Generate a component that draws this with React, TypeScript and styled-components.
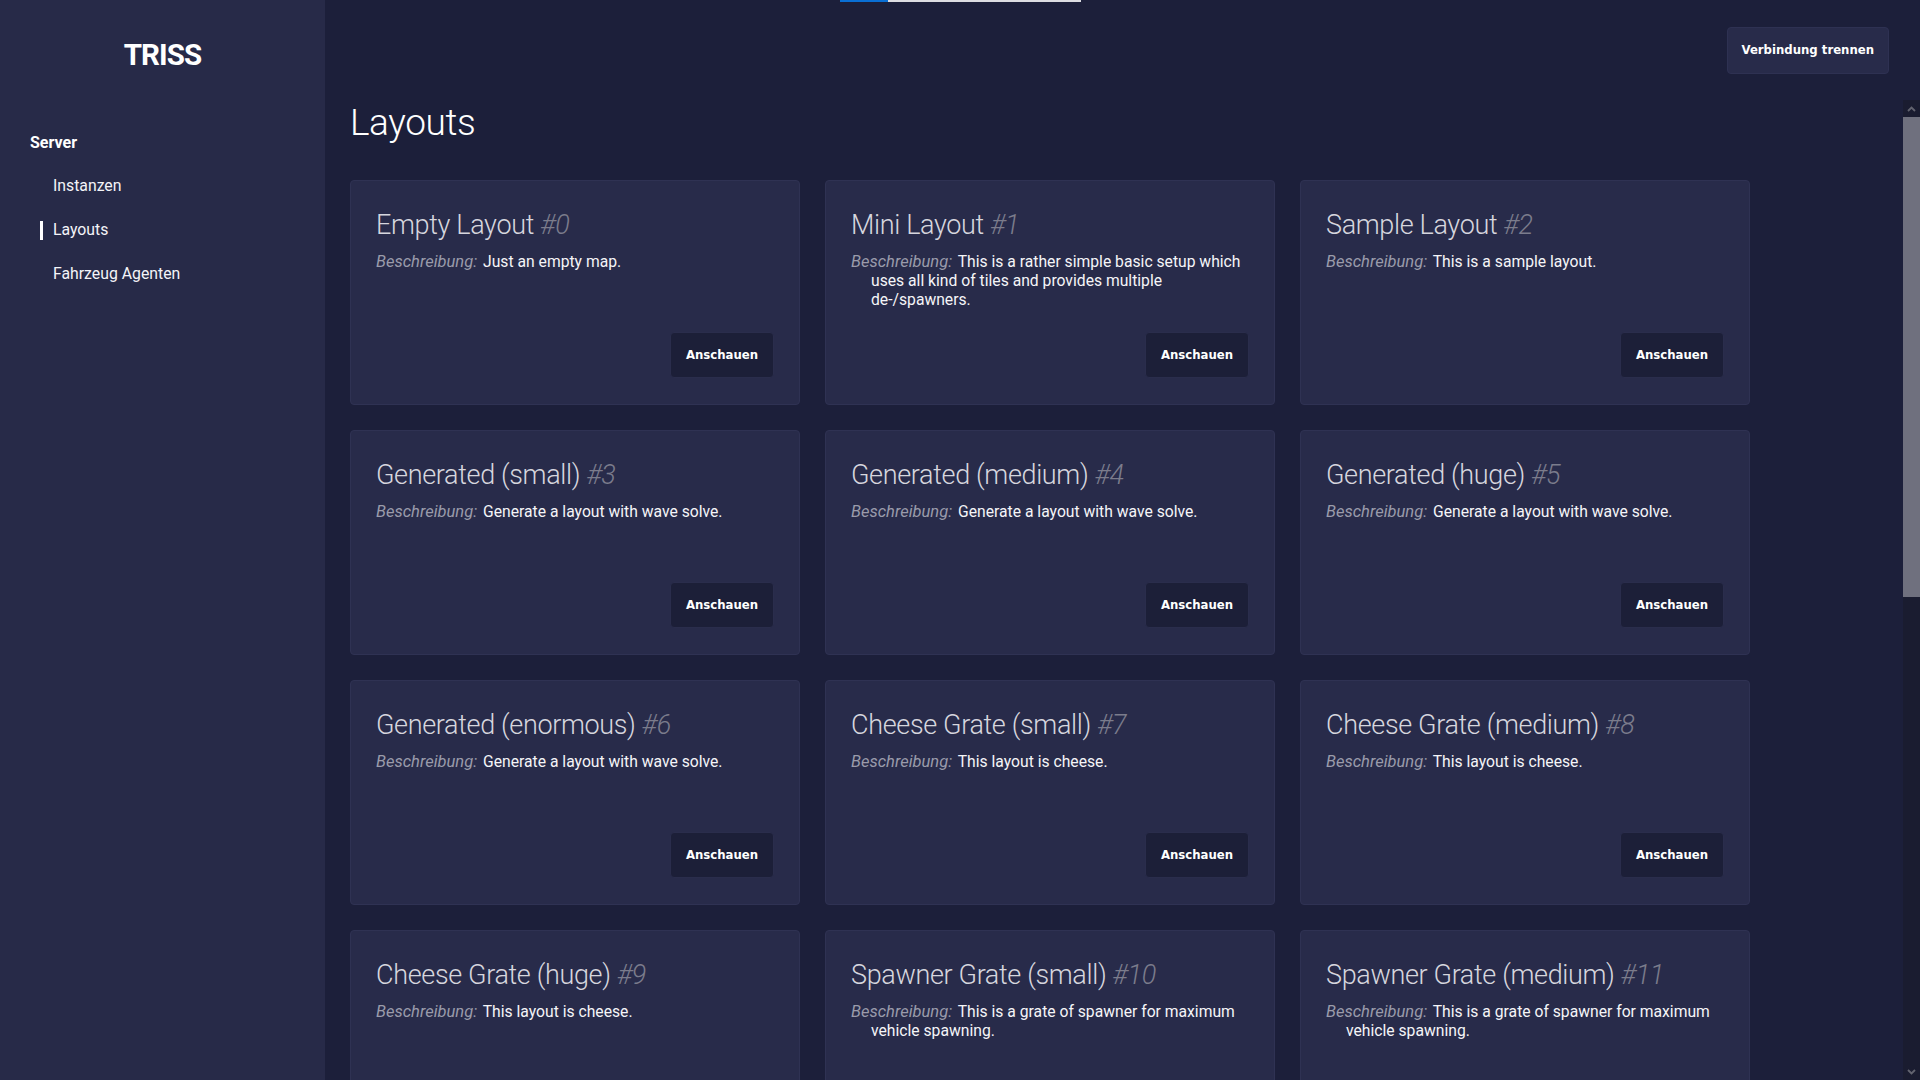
import React from "react";
import styled, { createGlobalStyle } from "styled-components";

const GlobalStyle = createGlobalStyle`
  html, body, #root {
    height: 100%;
  }
  body {
    margin: 0;
    background: #1c1f3a;
    font-family: Roboto, "Noto Sans", "Liberation Sans", sans-serif;
    color: #f2f2f5;
    overflow: hidden;
  }
  * {
    box-sizing: border-box;
  }
`;

const Shell = styled.div`
  display: flex;
  height: 100vh;
  width: 100%;
`;

const Sidebar = styled.aside`
  width: 325px;
  flex-shrink: 0;
  background: #272a48;
  padding-top: 36px;
  display: flex;
  flex-direction: column;
`;

const Logo = styled.div`
  text-align: center;
  font-size: 29.5px;
  letter-spacing: -0.9px;
  line-height: 38px;
  font-weight: 700;
  color: #ffffff;
`;

const NavSection = styled.nav`
  margin-top: 59px;
  padding-left: 30px;
  display: flex;
  flex-direction: column;
`;

const SectionLabel = styled.div`
  font-size: 16px;
  line-height: 20px;
  font-weight: 700;
  color: #ffffff;
  margin-bottom: 11px;
`;

const NavItem = styled.a<{ $active?: boolean }>`
  display: flex;
  align-items: center;
  padding: 12px 0 12px 10px;
  font-size: 15.8px;
  line-height: 20px;
  color: #f4f4f8;
  text-decoration: none;
  cursor: pointer;
`;

const Marker = styled.span<{ $active?: boolean }>`
  width: 3px;
  height: 19px;
  margin-right: 10px;
  background: ${(p) => (p.$active ? "#ffffff" : "transparent")};
`;

const Main = styled.main`
  flex: 1;
  min-width: 0;
  display: flex;
  flex-direction: column;
  position: relative;
`;

const TopBar = styled.header`
  height: 100px;
  flex-shrink: 0;
  display: flex;
  align-items: center;
  justify-content: flex-end;
  padding-right: 31px;
`;

const Progress = styled.div`
  position: absolute;
  top: 0;
  left: 515px;
  display: flex;
  height: 2px;
`;

const ProgressPart = styled.span<{ $w: number; $c: string }>`
  width: ${(p) => p.$w}px;
  height: 2px;
  background: ${(p) => p.$c};
`;

const Button = styled.button<{ $raised?: boolean }>`
  height: ${(p) => (p.$raised ? 47 : 46)}px;
  padding: 0 ${(p) => (p.$raised ? 14 : 15)}px;
  background: ${(p) => (p.$raised ? "#282b4a" : "#1c1f38")};
  border: 1px solid ${(p) => (p.$raised ? "#2e3152" : "#2a2d4c")};
  border-radius: 4px;
  color: #ffffff;
  font-family: "DejaVu Sans Condensed", "DejaVu Sans", Verdana, sans-serif;
  font-stretch: condensed;
  font-weight: 700;
  font-size: 13px;
  line-height: 16px;
  cursor: pointer;
  white-space: nowrap;
`;

const ScrollArea = styled.div`
  flex: 1;
  min-height: 0;
  display: flex;
`;

const Content = styled.section`
  flex: 1;
  min-width: 0;
  overflow: hidden;
  padding-left: 25px;
`;

const PageTitle = styled.h1`
  margin: 0 0 35px;
  font-size: 37px;
  letter-spacing: -0.4px;
  line-height: 45px;
  font-weight: 300;
  color: #ffffff;
`;

const Grid = styled.div`
  display: grid;
  grid-template-columns: repeat(3, 450px);
  gap: 25px;
`;

const Card = styled.article`
  height: 225px;
  background: #282b4a;
  border: 1px solid #2f3253;
  border-radius: 4px;
  padding: 25px 25px 26px;
  display: flex;
  flex-direction: column;
`;

const CardTitle = styled.h2`
  margin: 0 0 8px;
  font-size: 27px;
  letter-spacing: -0.35px;
  line-height: 38px;
  font-weight: 300;
  color: #d6d6de;
`;

const CardId = styled.span`
  font-style: italic;
  color: #7b7c8c;
`;

const Description = styled.p`
  margin: 0;
  font-size: 15.7px;
  line-height: 19.2px;
  color: #f5f5f8;
  padding-left: 20px;
  text-indent: -20px;
`;

const DescLabel = styled.span`
  font-style: italic;
  font-size: 16.5px;
  margin-right: 2px;
  color: #9a9bab;
`;

const CardFooter = styled.div`
  margin-top: auto;
  display: flex;
  justify-content: flex-end;
`;

const Scrollbar = styled.div`
  width: 17px;
  flex-shrink: 0;
  display: flex;
  flex-direction: column;
  background: #1a1c30;
`;

const ScrollArrow = styled.div`
  height: 17px;
  display: flex;
  align-items: center;
  justify-content: center;
`;

const ScrollTrack = styled.div`
  flex: 1;
  display: flex;
  flex-direction: column;
`;

const Thumb = styled.div`
  height: 480px;
  background: #6f707e;
`;

const Chevron = ({ down }: { down?: boolean }) => (
  <svg width="9" height="6" viewBox="0 0 9 6">
    <polyline
      points={down ? "1,1 4.5,4.5 8,1" : "1,5 4.5,1.5 8,5"}
      fill="none"
      stroke="#62636f"
      strokeWidth="1.8"
    />
  </svg>
);

type Layout = { id: number; name: string; desc: string };

const grate = "This is a grate of spawner for maximum vehicle spawning.";
const wave = "Generate a layout with wave solve.";
const cheese = "This layout is cheese.";

const layouts: Layout[] = [
  { id: 0, name: "Empty Layout", desc: "Just an empty map." },
  {
    id: 1,
    name: "Mini Layout",
    desc: "This is a rather simple basic setup which uses all kind of tiles and provides multiple de-/spawners.",
  },
  { id: 2, name: "Sample Layout", desc: "This is a sample layout." },
  { id: 3, name: "Generated (small)", desc: wave },
  { id: 4, name: "Generated (medium)", desc: wave },
  { id: 5, name: "Generated (huge)", desc: wave },
  { id: 6, name: "Generated (enormous)", desc: wave },
  { id: 7, name: "Cheese Grate (small)", desc: cheese },
  { id: 8, name: "Cheese Grate (medium)", desc: cheese },
  { id: 9, name: "Cheese Grate (huge)", desc: cheese },
  { id: 10, name: "Spawner Grate (small)", desc: grate },
  { id: 11, name: "Spawner Grate (medium)", desc: grate },
  { id: 12, name: "Spawner Grate (huge)", desc: grate },
];

const navItems = [
  { label: "Instanzen", active: false },
  { label: "Layouts", active: true },
  { label: "Fahrzeug Agenten", active: false },
];

export default function App() {
  return (
    <>
      <GlobalStyle />
      <Shell>
        <Sidebar>
          <Logo>TRISS</Logo>
          <NavSection>
            <SectionLabel>Server</SectionLabel>
            {navItems.map((item) => (
              <NavItem key={item.label} $active={item.active}>
                <Marker $active={item.active} />
                {item.label}
              </NavItem>
            ))}
          </NavSection>
        </Sidebar>
        <Main>
          <Progress>
            <ProgressPart $w={48} $c="#0a6fd4" />
            <ProgressPart $w={193} $c="#dcdde2" />
          </Progress>
          <TopBar>
            <Button $raised>Verbindung trennen</Button>
          </TopBar>
          <ScrollArea>
            <Content>
              <PageTitle>Layouts</PageTitle>
              <Grid>
                {layouts.map((l) => (
                  <Card key={l.id}>
                    <CardTitle>
                      {l.name} <CardId>#{l.id}</CardId>
                    </CardTitle>
                    <Description>
                      <DescLabel>Beschreibung:</DescLabel> {l.desc}
                    </Description>
                    <CardFooter>
                      <Button>Anschauen</Button>
                    </CardFooter>
                  </Card>
                ))}
              </Grid>
            </Content>
            <Scrollbar>
              <ScrollArrow>
                <Chevron />
              </ScrollArrow>
              <ScrollTrack>
                <Thumb />
              </ScrollTrack>
              <ScrollArrow>
                <Chevron down />
              </ScrollArrow>
            </Scrollbar>
          </ScrollArea>
        </Main>
      </Shell>
    </>
  );
}
